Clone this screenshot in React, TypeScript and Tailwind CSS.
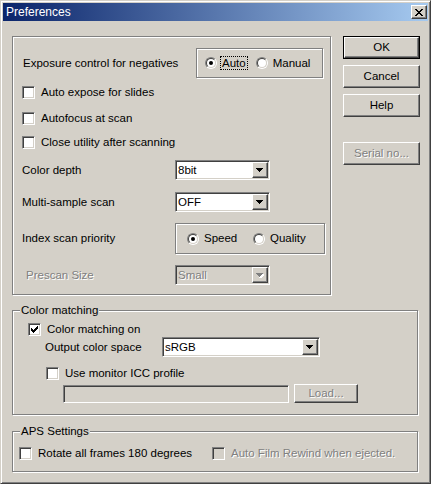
import React from "react";

const raised =
  "border border-t-white border-l-white border-r-[#404040] border-b-[#404040] shadow-[inset_-1px_-1px_0_#808080]";
const sunken =
  "border border-t-[#808080] border-l-[#808080] border-r-white border-b-white shadow-[inset_1px_1px_0_#404040,inset_-1px_-1px_0_#d4d0c8]";
const etched = "border border-[#808080] shadow-[inset_1px_1px_0_#fff,1px_1px_0_#fff]";
const dim = "text-[#808080] [text-shadow:1px_1px_0_#fff]";

const Radio = ({ on }: { on?: boolean }) => (
  <span className="flex h-[12px] w-[12px] shrink-0 rounded-full border border-t-[#808080] border-l-[#808080] border-r-white border-b-white">
    <span className="flex flex-1 items-center justify-center rounded-full border border-t-[#404040] border-l-[#404040] border-r-[#d4d0c8] border-b-[#d4d0c8] bg-white">
      {on && <span className="h-[4px] w-[4px] rounded-full bg-black" />}
    </span>
  </span>
);

const Check = ({ on, disabled }: { on?: boolean; disabled?: boolean }) => (
  <span
    className={`flex h-[13px] w-[13px] shrink-0 items-center justify-center ${sunken} ${
      disabled ? "bg-[#d4d0c8]" : "bg-white"
    }`}
  >
    {on && (
      <svg width="7" height="7" viewBox="0 0 7 7" shapeRendering="crispEdges">
        <g fill="#000">
          <rect x="6" y="0" width="1" height="1" />
          <rect x="5" y="1" width="2" height="1" />
          <rect x="0" y="2" width="1" height="1" />
          <rect x="4" y="2" width="3" height="1" />
          <rect x="0" y="3" width="2" height="1" />
          <rect x="3" y="3" width="3" height="1" />
          <rect x="0" y="4" width="5" height="1" />
          <rect x="1" y="5" width="3" height="1" />
          <rect x="2" y="6" width="1" height="1" />
        </g>
      </svg>
    )}
  </span>
);

const Arrow = ({ disabled }: { disabled?: boolean }) => (
  <span className={`flex h-[16px] w-[16px] shrink-0 items-center justify-center bg-[#d4d0c8] ${raised}`}>
    <svg width="8" height="5" viewBox="0 0 8 5" shapeRendering="crispEdges">
      {disabled && <path d="M2 1h7v1h-1v1h-1v1h-1v1h-1v1h-1z" fill="#fff" />}
      <path d="M0 0h7v1h-1v1h-1v1h-1v1h-1v-1h-1v-1h-1v-1h-1z" fill={disabled ? "#808080" : "#000"} />
    </svg>
  </span>
);

const Combo = ({
  value,
  className,
  disabled,
}: {
  value: string;
  className?: string;
  disabled?: boolean;
}) => (
  <div
    className={`flex h-[20px] items-center p-[1px] pl-[2px] ${sunken} ${
      disabled ? "bg-[#d4d0c8]" : "bg-white"
    } ${className}`}
  >
    <span className={`flex-1 leading-[13px] ${disabled ? dim : ""}`}>{value}</span>
    <Arrow disabled={disabled} />
  </div>
);

const Button = ({
  children,
  def,
  disabled,
  className,
}: {
  children: React.ReactNode;
  def?: boolean;
  disabled?: boolean;
  className?: string;
}) => (
  <div className={`flex ${def ? "border border-black" : ""} ${className}`}>
    <div
      className={`flex flex-1 items-center justify-center bg-[#d4d0c8] leading-[13px] ${raised} ${
        disabled ? dim : ""
      }`}
    >
      {children}
    </div>
  </div>
);

const Group = ({
  label,
  className,
  children,
}: {
  label?: string;
  className?: string;
  children: React.ReactNode;
}) => (
  <div className={`relative ${etched} ${className}`}>
    {label && (
      <span className="absolute left-[7px] top-[-7px] bg-[#d4d0c8] px-[1px] leading-[13px]">
        {label}
      </span>
    )}
    {children}
  </div>
);

const CheckRow = ({
  label,
  on,
  disabled,
  className,
}: {
  label: string;
  on?: boolean;
  disabled?: boolean;
  className?: string;
}) => (
  <div className={`flex items-center gap-[6px] ${className}`}>
    <Check on={on} disabled={disabled} />
    <span className={`leading-[13px] ${disabled ? dim : ""}`}>{label}</span>
  </div>
);

export default function App() {
  return (
    <div className="h-[484px] w-[431px] font-['Liberation_Sans',Arial,sans-serif] text-[11.5px] text-black">
      <div className="flex h-full flex-col border border-t-[#d4d0c8] border-l-[#d4d0c8] border-r-[#404040] border-b-[#404040] bg-[#d4d0c8] p-[2px] shadow-[inset_1px_1px_0_#fff,inset_-1px_-1px_0_#808080]">
        {/* title bar */}
        <div className="flex h-[18px] shrink-0 items-center justify-between bg-[linear-gradient(to_right,#0a246a,#a6caf0)] pl-[3px] pr-[1px]">
          <span className="text-[12px] leading-[14px] text-white">Preferences</span>
          <div className={`flex h-[14px] w-[16px] items-center justify-center bg-[#d4d0c8] ${raised}`}>
            <svg width="8" height="7" viewBox="0 0 8 7" shapeRendering="crispEdges">
              <path
                d="M0 0h2v1h1v1h2V1h1V0h2v1h-1v1h-1v1h-1v1h1v1h1v1h1v1H6V6H5V5H3v1H2v1H0V6h1V5h1V4h1V3H2V2H1V1H0z"
                fill="#000"
              />
            </svg>
          </div>
        </div>

        <div className="flex flex-col pl-[9px]">
          <div className="mt-[15px] flex items-start">
            {/* main options */}
            <Group className="h-[259px] w-[319px]">
              <div className="flex flex-col pl-[9px] pt-[11px]">
                <div className="flex items-center">
                  <span className="w-[174px] pl-[1px] leading-[13px]">Exposure control for negatives</span>
                  <Group className="flex h-[30px] w-[127px] items-center pl-[8px]">
                    <Radio on />
                    <span className="ml-[3px] border border-dotted border-black px-[1px] leading-[12px]">Auto</span>
                    <span className="ml-[8px]">
                      <Radio />
                    </span>
                    <span className="ml-[5px] leading-[13px]">Manual</span>
                  </Group>
                </div>
                <CheckRow className="mt-[8px]" label="Auto expose for slides" />
                <CheckRow className="mt-[13px]" label="Autofocus at scan" />
                <CheckRow className="mt-[11px]" label="Close utility after scanning" />
                <div className="mt-[11px] flex items-center">
                  <span className="w-[153px] leading-[13px]">Color depth</span>
                  <Combo className="w-[95px]" value="8bit" />
                </div>
                <div className="mt-[12px] flex items-center">
                  <span className="w-[153px] leading-[13px]">Multi-sample scan</span>
                  <Combo className="w-[95px]" value="OFF" />
                </div>
                <div className="mt-[11px] flex items-center">
                  <span className="w-[153px] leading-[13px]">Index scan priority</span>
                  <Group className="flex h-[31px] w-[150px] items-center pl-[11px]">
                    <span className="flex w-[66px] items-center gap-[5px]">
                      <Radio on />
                      <span className="leading-[13px]">Speed</span>
                    </span>
                    <span className="flex items-center gap-[5px]">
                      <Radio />
                      <span className="leading-[13px]">Quality</span>
                    </span>
                  </Group>
                </div>
                <div className="mt-[11px] flex items-center">
                  <span className={`w-[153px] pl-[4px] leading-[13px] ${dim}`}>Prescan Size</span>
                  <Combo className="w-[95px]" value="Small" disabled />
                </div>
              </div>
            </Group>

            {/* buttons */}
            <div className="ml-[12px] flex flex-col">
              <Button def className="h-[23px] w-[77px]">
                OK
              </Button>
              <Button className="mt-[6px] h-[23px] w-[77px]">Cancel</Button>
              <Button className="mt-[6px] h-[23px] w-[77px]">Help</Button>
              <Button disabled className="mt-[25px] h-[23px] w-[77px]">
                Serial no...
              </Button>
            </div>
          </div>

          {/* color matching */}
          <Group label="Color matching" className="mt-[15px] h-[105px] w-[406px]">
            <div className="flex flex-col pl-[15px] pt-[12px]">
              <CheckRow on label="Color matching on" className="gap-[5px]" />
              <div className="mt-[1px] flex items-center pl-[17px]">
                <span className="w-[117px] leading-[13px]">Output color space</span>
                <Combo className="w-[158px]" value="sRGB" />
              </div>
              <CheckRow label="Use monitor ICC profile" className="mt-[10px] ml-[18px] gap-[4px]" />
              <div className="mt-[4px] flex items-center pl-[35px]">
                <div className={`h-[18px] w-[226px] bg-[#d4d0c8] ${sunken}`} />
                <Button disabled className="ml-[5px] h-[19px] w-[64px]">
                  Load...
                </Button>
              </div>
            </div>
          </Group>

          {/* APS */}
          <Group label="APS Settings" className="mt-[16px] h-[41px] w-[406px]">
            <div className="flex items-center pl-[6px] pt-[15px]">
              <CheckRow label="Rotate all frames 180 degrees" className="w-[193px] gap-[5px]" />
              <CheckRow disabled label="Auto Film Rewind when ejected." className="gap-[5px]" />
            </div>
          </Group>
        </div>
      </div>
    </div>
  );
}
